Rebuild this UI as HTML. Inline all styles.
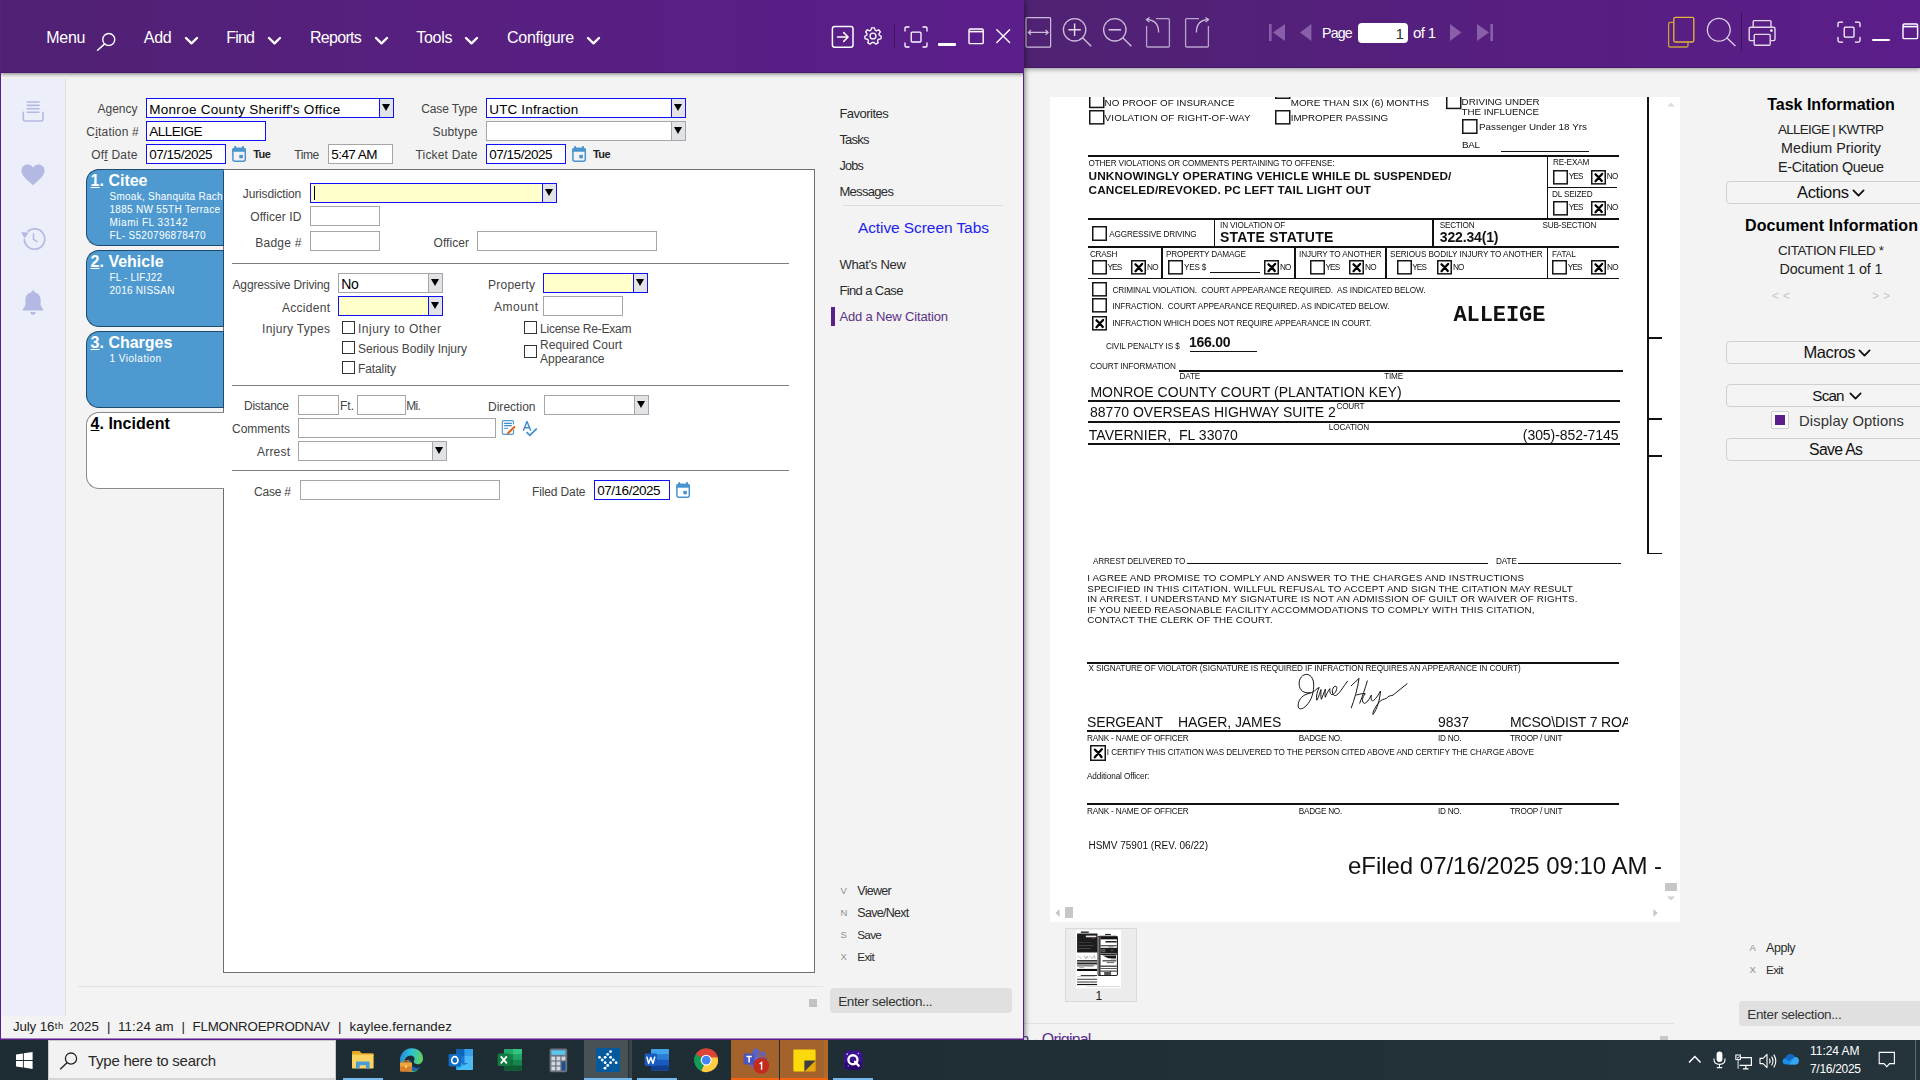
<!DOCTYPE html>
<html><head><meta charset="utf-8"><title>Citation</title>
<style>
*{box-sizing:border-box;margin:0;padding:0}
html,body{width:1920px;height:1080px;overflow:hidden;background:#f3f3f3;font-family:"Liberation Sans",sans-serif;}
.a{position:absolute;white-space:pre;line-height:1;display:block}
.p{position:absolute;display:block}
svg.p{overflow:visible}
#root{position:relative;width:1920px;height:1080px;overflow:hidden}
#lw{position:absolute;left:0;top:0;width:1024px;height:1040px;background:#f3f3f3;overflow:hidden;border-left:1px solid #5a1e8a;border-right:1px solid #5a1e8a;border-bottom:1px solid #5a1e8a;box-shadow:1px 0 5px rgba(0,0,0,.5)}
#lw>*{margin-left:-1px}
#lhead{position:absolute;left:0;top:0;width:1024px;height:73px;border-bottom:1px solid #481b70;background:linear-gradient(90deg,#4f2173 0%,#57207f 40%,#5b1e8b 100%);box-shadow:0 1px 4px rgba(0,0,0,.5)}
#lside{position:absolute;left:1px;top:79px;width:65px;height:937px;background:#eceef9;border-right:1px solid #e0e0e6}
#rw{position:absolute;left:1024px;top:0;width:896px;height:1040px;background:#f3f3f3;overflow:hidden}
#rhead{position:absolute;left:1024px;top:0;width:896px;height:68px;border-bottom:1px solid #451a6c;background:linear-gradient(90deg,#4f2272 0%,#561f7f 50%,#5b1e8a 100%);box-shadow:0 2px 4px rgba(0,0,0,.3)}
#tb{position:absolute;left:0;top:1040px;width:1920px;height:40px;background:linear-gradient(90deg,#1d2b32 0%,#1f2e35 45%,#25343b 100%);overflow:hidden}
#rw>*{margin-left:-1024px}
#doc{position:absolute;left:1050px;top:97px;width:630px;height:825px;background:#fff;overflow:hidden;filter:grayscale(1)}
#doc>*{margin-left:-1050px;margin-top:-97px}
#tb>*{margin-top:-1040px}

</style></head><body><div id="root">
<div id="rw">
<div id="doc">
<div class="p" style="left:1647.35px;top:97px;width:1.7px;height:457px;background:#111;"></div>
<div class="p" style="left:1647.2px;top:337.2px;width:14.8px;height:1.4px;background:#111;"></div>
<div class="p" style="left:1647.2px;top:418.3px;width:14.8px;height:1.4px;background:#111;"></div>
<div class="p" style="left:1647.2px;top:455.3px;width:14.8px;height:1.4px;background:#111;"></div>
<div class="p" style="left:1647.2px;top:552.9px;width:14.8px;height:1.4px;background:#111;"></div>
<svg class="p" style="left:1089px;top:93.3px;" width="15.5" height="15.2" viewBox="0 0 15.5 15.2"><rect x="0.75" y="0.75" width="14" height="13.7" fill="#fff" stroke="#161616" stroke-width="1.5"/></svg>
<span class="a" style="left:1104.6px;top:98px;font-size:9.8px;color:#111;letter-spacing:0.05px;">NO PROOF OF INSURANCE</span>
<svg class="p" style="left:1089px;top:110px;" width="15.5" height="14.6" viewBox="0 0 15.5 14.6"><rect x="0.75" y="0.75" width="14" height="13.1" fill="#fff" stroke="#161616" stroke-width="1.5"/></svg>
<span class="a" style="left:1104.6px;top:113px;font-size:9.8px;color:#111;letter-spacing:0.17px;">VIOLATION OF RIGHT-OF-WAY</span>
<svg class="p" style="left:1274.5px;top:84px;" width="15.5" height="15" viewBox="0 0 15.5 15"><rect x="0.75" y="0.75" width="14" height="13.5" fill="#fff" stroke="#161616" stroke-width="1.5"/></svg>
<span class="a" style="left:1290.7px;top:98px;font-size:9.8px;color:#111;letter-spacing:0.06px;">MORE THAN SIX (6) MONTHS</span>
<svg class="p" style="left:1274.5px;top:110px;" width="15.5" height="14.6" viewBox="0 0 15.5 14.6"><rect x="0.75" y="0.75" width="14" height="13.1" fill="#fff" stroke="#161616" stroke-width="1.5"/></svg>
<span class="a" style="left:1290.7px;top:113px;font-size:9.8px;color:#111;letter-spacing:-0.02px;">IMPROPER PASSING</span>
<svg class="p" style="left:1446px;top:93.6px;" width="15.5" height="15.2" viewBox="0 0 15.5 15.2"><rect x="0.75" y="0.75" width="14" height="13.7" fill="#fff" stroke="#161616" stroke-width="1.5"/></svg>
<span class="a" style="left:1461.6px;top:97px;font-size:9.8px;color:#111;letter-spacing:-0.03px;">DRIVING UNDER</span>
<span class="a" style="left:1461.6px;top:107px;font-size:9.8px;color:#111;letter-spacing:-0.03px;">THE INFLUENCE</span>
<svg class="p" style="left:1462.3px;top:118.6px;" width="15.6" height="15" viewBox="0 0 15.6 15"><rect x="0.75" y="0.75" width="14.1" height="13.5" fill="#fff" stroke="#161616" stroke-width="1.5"/></svg>
<span class="a" style="left:1479px;top:122px;font-size:9.8px;color:#111;letter-spacing:0.04px;">Passenger Under 18 Yrs</span>
<span class="a" style="left:1462px;top:140px;font-size:9.8px;color:#111;letter-spacing:-0.26px;">BAL</span>
<div class="p" style="left:1501px;top:150.95px;width:88px;height:1.1px;background:#111;"></div>
<div class="p" style="left:1088px;top:155.3px;width:531px;height:1.6px;background:#111;"></div>
<span class="a" style="left:1088.4px;top:160px;font-size:8.2px;color:#111;letter-spacing:-0.12px;">OTHER VIOLATIONS OR COMMENTS PERTAINING TO OFFENSE:</span>
<span class="a" style="left:1088.5px;top:171px;font-size:11.8px;color:#111;font-weight:bold;letter-spacing:0.14px;">UNKNOWINGLY OPERATING VEHICLE WHILE DL SUSPENDED/</span>
<span class="a" style="left:1088.5px;top:185px;font-size:11.8px;color:#111;font-weight:bold;letter-spacing:0.11px;">CANCELED/REVOKED. PC LEFT TAIL LIGHT OUT</span>
<div class="p" style="left:1546.9px;top:156px;width:1.6px;height:62.8px;background:#111;"></div>
<span class="a" style="left:1553px;top:159px;font-size:8.2px;color:#111;letter-spacing:-0.16px;">RE-EXAM</span>
<svg class="p" style="left:1553.3px;top:169.6px;" width="15" height="14.6" viewBox="0 0 15 14.6"><rect x="0.75" y="0.75" width="13.5" height="13.1" fill="#fff" stroke="#161616" stroke-width="1.5"/></svg>
<span class="a" style="left:1568.7px;top:173px;font-size:8.2px;color:#111;letter-spacing:-0.8px;">YES</span>
<svg class="p" style="left:1590.9px;top:169.6px;" width="15" height="14.6" viewBox="0 0 15 14.6"><rect x="0.75" y="0.75" width="13.5" height="13.1" fill="#fff" stroke="#161616" stroke-width="1.5"/><path d="M4.5 4.34 Q7.5 6.7 10.8 10.95 M11.1 3.94 Q7.9 7.3 4.5 11.25" stroke="#000" stroke-width="2.3" stroke-linecap="round" fill="none"/></svg>
<span class="a" style="left:1606.8px;top:173px;font-size:8.2px;color:#111;letter-spacing:-0.8px;">NO</span>
<div class="p" style="left:1547px;top:186.65px;width:70px;height:1.7px;background:#111;"></div>
<span class="a" style="left:1552px;top:191px;font-size:8.2px;color:#111;letter-spacing:-0.18px;">DL SEIZED</span>
<svg class="p" style="left:1553.3px;top:200.9px;" width="15" height="14.6" viewBox="0 0 15 14.6"><rect x="0.75" y="0.75" width="13.5" height="13.1" fill="#fff" stroke="#161616" stroke-width="1.5"/></svg>
<span class="a" style="left:1568.7px;top:204px;font-size:8.2px;color:#111;letter-spacing:-0.8px;">YES</span>
<svg class="p" style="left:1590.9px;top:200.9px;" width="15" height="14.6" viewBox="0 0 15 14.6"><rect x="0.75" y="0.75" width="13.5" height="13.1" fill="#fff" stroke="#161616" stroke-width="1.5"/><path d="M4.5 4.34 Q7.5 6.7 10.8 10.95 M11.1 3.94 Q7.9 7.3 4.5 11.25" stroke="#000" stroke-width="2.3" stroke-linecap="round" fill="none"/></svg>
<span class="a" style="left:1606.8px;top:204px;font-size:8.2px;color:#111;letter-spacing:-0.8px;">NO</span>
<div class="p" style="left:1088px;top:218px;width:531px;height:1.6px;background:#111;"></div>
<svg class="p" style="left:1092px;top:226.2px;" width="15" height="15" viewBox="0 0 15 15"><rect x="0.75" y="0.75" width="13.5" height="13.5" fill="#fff" stroke="#161616" stroke-width="1.5"/></svg>
<span class="a" style="left:1109.3px;top:231px;font-size:8.2px;color:#111;letter-spacing:-0.16px;">AGGRESSIVE DRIVING</span>
<div class="p" style="left:1213.8px;top:219px;width:1.6px;height:28px;background:#111;"></div>
<span class="a" style="left:1220px;top:222px;font-size:8.2px;color:#111;letter-spacing:-0.13px;">IN VIOLATION OF</span>
<span class="a" style="left:1220px;top:230px;font-size:14px;color:#111;font-weight:bold;letter-spacing:0.26px;">STATE STATUTE</span>
<div class="p" style="left:1432px;top:219px;width:1.6px;height:28px;background:#111;"></div>
<span class="a" style="left:1439.75px;top:222px;font-size:8.2px;color:#111;letter-spacing:-0.26px;">SECTION</span>
<span class="a" style="left:1439.75px;top:230px;font-size:14px;color:#111;font-weight:bold;letter-spacing:-0.15px;">322.34(1)</span>
<span class="a" style="left:1542.5px;top:222px;font-size:8.2px;color:#111;letter-spacing:-0.2px;">SUB-SECTION</span>
<div class="p" style="left:1088px;top:246.3px;width:531px;height:1.6px;background:#111;"></div>
<span class="a" style="left:1090px;top:251px;font-size:8.2px;color:#111;letter-spacing:-0.33px;">CRASH</span>
<svg class="p" style="left:1092px;top:259.6px;" width="15" height="14.6" viewBox="0 0 15 14.6"><rect x="0.75" y="0.75" width="13.5" height="13.1" fill="#fff" stroke="#161616" stroke-width="1.5"/></svg>
<span class="a" style="left:1107.4px;top:264px;font-size:8.2px;color:#111;letter-spacing:-0.8px;">YES</span>
<svg class="p" style="left:1131.2px;top:259.6px;" width="15" height="14.6" viewBox="0 0 15 14.6"><rect x="0.75" y="0.75" width="13.5" height="13.1" fill="#fff" stroke="#161616" stroke-width="1.5"/><path d="M4.5 4.34 Q7.5 6.7 10.8 10.95 M11.1 3.94 Q7.9 7.3 4.5 11.25" stroke="#000" stroke-width="2.3" stroke-linecap="round" fill="none"/></svg>
<span class="a" style="left:1147.1px;top:264px;font-size:8.2px;color:#111;letter-spacing:-0.8px;">NO</span>
<div class="p" style="left:1161.2px;top:247px;width:1.6px;height:31.5px;background:#111;"></div>
<span class="a" style="left:1166px;top:251px;font-size:8.2px;color:#111;letter-spacing:-0.19px;">PROPERTY DAMAGE</span>
<svg class="p" style="left:1168px;top:259.6px;" width="15" height="14.6" viewBox="0 0 15 14.6"><rect x="0.75" y="0.75" width="13.5" height="13.1" fill="#fff" stroke="#161616" stroke-width="1.5"/></svg>
<span class="a" style="left:1184px;top:264px;font-size:8.2px;color:#111;letter-spacing:-0.21px;">YES $</span>
<div class="p" style="left:1210px;top:272.1px;width:50px;height:1.2px;background:#111;"></div>
<svg class="p" style="left:1264px;top:259.6px;" width="15" height="14.6" viewBox="0 0 15 14.6"><rect x="0.75" y="0.75" width="13.5" height="13.1" fill="#fff" stroke="#161616" stroke-width="1.5"/><path d="M4.5 4.34 Q7.5 6.7 10.8 10.95 M11.1 3.94 Q7.9 7.3 4.5 11.25" stroke="#000" stroke-width="2.3" stroke-linecap="round" fill="none"/></svg>
<span class="a" style="left:1280px;top:264px;font-size:8.2px;color:#111;letter-spacing:-0.8px;">NO</span>
<div class="p" style="left:1294.2px;top:247px;width:1.6px;height:31.5px;background:#111;"></div>
<span class="a" style="left:1299px;top:251px;font-size:8.2px;color:#111;letter-spacing:-0.12px;">INJURY TO ANOTHER</span>
<svg class="p" style="left:1310px;top:259.6px;" width="15" height="14.6" viewBox="0 0 15 14.6"><rect x="0.75" y="0.75" width="13.5" height="13.1" fill="#fff" stroke="#161616" stroke-width="1.5"/></svg>
<span class="a" style="left:1325.4px;top:264px;font-size:8.2px;color:#111;letter-spacing:-0.8px;">YES</span>
<svg class="p" style="left:1349.2px;top:259.6px;" width="15" height="14.6" viewBox="0 0 15 14.6"><rect x="0.75" y="0.75" width="13.5" height="13.1" fill="#fff" stroke="#161616" stroke-width="1.5"/><path d="M4.5 4.34 Q7.5 6.7 10.8 10.95 M11.1 3.94 Q7.9 7.3 4.5 11.25" stroke="#000" stroke-width="2.3" stroke-linecap="round" fill="none"/></svg>
<span class="a" style="left:1365.1px;top:264px;font-size:8.2px;color:#111;letter-spacing:-0.8px;">NO</span>
<div class="p" style="left:1385.4px;top:247px;width:1.6px;height:31.5px;background:#111;"></div>
<span class="a" style="left:1390px;top:251px;font-size:8.2px;color:#111;letter-spacing:-0.08px;">SERIOUS BODILY INJURY TO ANOTHER</span>
<svg class="p" style="left:1396.8px;top:259.6px;" width="15" height="14.6" viewBox="0 0 15 14.6"><rect x="0.75" y="0.75" width="13.5" height="13.1" fill="#fff" stroke="#161616" stroke-width="1.5"/></svg>
<span class="a" style="left:1412.2px;top:264px;font-size:8.2px;color:#111;letter-spacing:-0.8px;">YES</span>
<svg class="p" style="left:1437px;top:259.6px;" width="15" height="14.6" viewBox="0 0 15 14.6"><rect x="0.75" y="0.75" width="13.5" height="13.1" fill="#fff" stroke="#161616" stroke-width="1.5"/><path d="M4.5 4.34 Q7.5 6.7 10.8 10.95 M11.1 3.94 Q7.9 7.3 4.5 11.25" stroke="#000" stroke-width="2.3" stroke-linecap="round" fill="none"/></svg>
<span class="a" style="left:1452.9px;top:264px;font-size:8.2px;color:#111;letter-spacing:-0.8px;">NO</span>
<div class="p" style="left:1546.9px;top:247px;width:1.6px;height:31.5px;background:#111;"></div>
<span class="a" style="left:1552px;top:251px;font-size:8.2px;color:#111;letter-spacing:0.01px;">FATAL</span>
<svg class="p" style="left:1552.4px;top:259.6px;" width="15" height="14.6" viewBox="0 0 15 14.6"><rect x="0.75" y="0.75" width="13.5" height="13.1" fill="#fff" stroke="#161616" stroke-width="1.5"/></svg>
<span class="a" style="left:1567.8px;top:264px;font-size:8.2px;color:#111;letter-spacing:-0.8px;">YES</span>
<svg class="p" style="left:1591.2px;top:259.6px;" width="15" height="14.6" viewBox="0 0 15 14.6"><rect x="0.75" y="0.75" width="13.5" height="13.1" fill="#fff" stroke="#161616" stroke-width="1.5"/><path d="M4.5 4.34 Q7.5 6.7 10.8 10.95 M11.1 3.94 Q7.9 7.3 4.5 11.25" stroke="#000" stroke-width="2.3" stroke-linecap="round" fill="none"/></svg>
<span class="a" style="left:1607.1px;top:264px;font-size:8.2px;color:#111;letter-spacing:-0.8px;">NO</span>
<div class="p" style="left:1088px;top:277.7px;width:531px;height:1.6px;background:#111;"></div>
<svg class="p" style="left:1092px;top:281.6px;" width="15" height="14.6" viewBox="0 0 15 14.6"><rect x="0.75" y="0.75" width="13.5" height="13.1" fill="#fff" stroke="#161616" stroke-width="1.5"/></svg>
<span class="a" style="left:1112.4px;top:287px;font-size:8.2px;color:#111;letter-spacing:-0.1px;">CRIMINAL VIOLATION.  COURT APPEARANCE REQUIRED.  AS INDICATED BELOW.</span>
<svg class="p" style="left:1092px;top:298.2px;" width="15" height="14.6" viewBox="0 0 15 14.6"><rect x="0.75" y="0.75" width="13.5" height="13.1" fill="#fff" stroke="#161616" stroke-width="1.5"/></svg>
<span class="a" style="left:1112.4px;top:303px;font-size:8.2px;color:#111;letter-spacing:-0.11px;">INFRACTION.  COURT APPEARANCE REQUIRED. AS INDICATED BELOW.</span>
<svg class="p" style="left:1092px;top:316px;" width="15" height="14.6" viewBox="0 0 15 14.6"><rect x="0.75" y="0.75" width="13.5" height="13.1" fill="#fff" stroke="#161616" stroke-width="1.5"/><path d="M4.5 4.34 Q7.5 6.7 10.8 10.95 M11.1 3.94 Q7.9 7.3 4.5 11.25" stroke="#000" stroke-width="2.3" stroke-linecap="round" fill="none"/></svg>
<span class="a" style="left:1112.4px;top:320px;font-size:8.2px;color:#111;letter-spacing:-0.12px;">INFRACTION WHICH DOES NOT REQUIRE APPEARANCE IN COURT.</span>
<span class="a" style="left:1453.4px;top:305px;font-size:22px;color:#111;font-weight:bold;font-family:'Liberation Mono',monospace;letter-spacing:-0.07px;">ALLEIGE</span>
<span class="a" style="left:1105.9px;top:343px;font-size:8.2px;color:#111;letter-spacing:-0.12px;">CIVIL PENALTY IS $</span>
<span class="a" style="left:1189px;top:335px;font-size:14px;color:#111;font-weight:bold;letter-spacing:-0.26px;">166.00</span>
<div class="p" style="left:1190px;top:350.6px;width:67px;height:1.2px;background:#111;"></div>
<span class="a" style="left:1090px;top:363px;font-size:8.2px;color:#111;letter-spacing:-0.12px;">COURT INFORMATION</span>
<div class="p" style="left:1179.3px;top:370.1px;width:443.7px;height:1.6px;background:#111;"></div>
<span class="a" style="left:1179.6px;top:373px;font-size:8.2px;color:#111;letter-spacing:-0.22px;">DATE</span>
<span class="a" style="left:1384.3px;top:373px;font-size:8.2px;color:#111;letter-spacing:-0.23px;">TIME</span>
<span class="a" style="left:1090.4px;top:385px;font-size:14px;color:#111;letter-spacing:0.04px;">MONROE COUNTY COURT (PLANTATION KEY)</span>
<div class="p" style="left:1088px;top:400.1px;width:532px;height:1.6px;background:#111;"></div>
<span class="a" style="left:1090px;top:405px;font-size:14px;color:#111;letter-spacing:0.01px;">88770 OVERSEAS HIGHWAY SUITE 2</span>
<span class="a" style="left:1336.5px;top:403px;font-size:8.2px;color:#111;letter-spacing:-0.25px;">COURT</span>
<div class="p" style="left:1088px;top:421.2px;width:532px;height:1.6px;background:#111;"></div>
<span class="a" style="left:1328.8px;top:424px;font-size:8.2px;color:#111;letter-spacing:-0.13px;">LOCATION</span>
<span class="a" style="left:1088.8px;top:428px;font-size:14px;color:#111;letter-spacing:0.04px;">TAVERNIER,  FL 33070</span>
<span class="a" style="left:1522.8px;top:428px;font-size:14px;color:#111;letter-spacing:-0.06px;">(305)-852-7145</span>
<div class="p" style="left:1088px;top:443.4px;width:532px;height:1.6px;background:#111;"></div>
<span class="a" style="left:1093px;top:558px;font-size:8.2px;color:#111;letter-spacing:-0.15px;">ARREST DELIVERED TO</span>
<div class="p" style="left:1186.8px;top:562.8px;width:301.2px;height:1.6px;background:#111;"></div>
<span class="a" style="left:1496px;top:558px;font-size:8.2px;color:#111;letter-spacing:-0.09px;">DATE</span>
<div class="p" style="left:1518px;top:562.8px;width:103px;height:1.6px;background:#111;"></div>
<span class="a" style="left:1087.2px;top:573px;font-size:9.8px;color:#111;letter-spacing:0.16px;">I AGREE AND PROMISE TO COMPLY AND ANSWER TO THE CHARGES AND INSTRUCTIONS</span>
<span class="a" style="left:1087.2px;top:584px;font-size:9.8px;color:#111;letter-spacing:0.18px;">SPECIFIED IN THIS CITATION. WILLFUL REFUSAL TO ACCEPT AND SIGN THE CITATION MAY RESULT</span>
<span class="a" style="left:1087.2px;top:594px;font-size:9.8px;color:#111;letter-spacing:0.15px;">IN ARREST. I UNDERSTAND MY SIGNATURE IS NOT AN ADMISSION OF GUILT OR WAIVER OF RIGHTS.</span>
<span class="a" style="left:1087.2px;top:605px;font-size:9.8px;color:#111;letter-spacing:0.16px;">IF YOU NEED REASONABLE FACILITY ACCOMMODATIONS TO COMPLY WITH THIS CITATION,</span>
<span class="a" style="left:1087.2px;top:615px;font-size:9.8px;color:#111;letter-spacing:0.14px;">CONTACT THE CLERK OF THE COURT.</span>
<div class="p" style="left:1087px;top:661.95px;width:532px;height:1.7px;background:#111;"></div>
<span class="a" style="left:1088.4px;top:665px;font-size:8.2px;color:#111;letter-spacing:-0.1px;">X SIGNATURE OF VIOLATOR (SIGNATURE IS REQUIRED IF INFRACTION REQUIRES AN APPEARANCE IN COURT)</span>
<svg class="p" style="left:1290px;top:668px;" width="130" height="52" viewBox="0 0 1920 768"><path d="M300 365 C200 380 140 330 135 240 C130 150 190 90 250 95 C320 100 355 180 350 270 C345 400 300 520 200 590 C160 610 120 612 120 560 C120 480 170 410 250 385 C300 370 330 362 345 352 C370 335 405 295 432 288 C405 330 380 430 396 476 C425 430 445 350 458 318 C456 370 452 430 464 462 C482 420 505 350 522 312 C520 350 512 400 522 432 C540 385 565 330 590 305 C585 340 590 380 612 392 C650 400 700 330 690 285 C680 255 640 270 628 320 C618 370 640 410 668 408 C720 400 790 270 850 195 M905 262 L1020 152 C1000 300 950 470 905 588 M1142 192 C1110 300 1070 420 1030 520 M985 398 C1040 382 1090 372 1112 380 C1065 425 1055 515 1100 522 C1150 512 1180 432 1202 400 C1190 450 1200 500 1232 482 C1282 442 1312 382 1336 340 C1330 450 1292 600 1226 686 C1212 660 1262 560 1340 482 C1372 456 1420 462 1442 432 C1470 402 1500 412 1522 400 L1730 232" fill="none" stroke="#0a0a0a" stroke-width="14" stroke-linecap="round" stroke-linejoin="round"/></svg>
<span class="a" style="left:1087px;top:715px;font-size:14px;color:#111;letter-spacing:-0.15px;">SERGEANT</span>
<span class="a" style="left:1178px;top:715px;font-size:14px;color:#111;letter-spacing:-0.09px;">HAGER, JAMES</span>
<span class="a" style="left:1438px;top:715px;font-size:14px;color:#111;letter-spacing:-0.05px;">9837</span>
<div class="p" style="left:1510px;top:710px;width:118px;height:20px;overflow:hidden">
<span class="a" style="left:0px;top:5px;font-size:14px;color:#111;letter-spacing:-0.17px;">MCSO\DIST 7 ROAD</span>
</div>
<div class="p" style="left:1087px;top:730.45px;width:532px;height:1.7px;background:#111;"></div>
<span class="a" style="left:1087px;top:735px;font-size:8.2px;color:#111;letter-spacing:-0.18px;">RANK - NAME OF OFFICER</span>
<span class="a" style="left:1298.8px;top:735px;font-size:8.2px;color:#111;letter-spacing:-0.26px;">BADGE NO.</span>
<span class="a" style="left:1438px;top:735px;font-size:8.2px;color:#111;letter-spacing:-0.27px;">ID NO.</span>
<span class="a" style="left:1510px;top:735px;font-size:8.2px;color:#111;letter-spacing:-0.21px;">TROOP / UNIT</span>
<span class="a" style="left:1087px;top:808px;font-size:8.2px;color:#111;letter-spacing:-0.18px;">RANK - NAME OF OFFICER</span>
<span class="a" style="left:1298.8px;top:808px;font-size:8.2px;color:#111;letter-spacing:-0.26px;">BADGE NO.</span>
<span class="a" style="left:1438px;top:808px;font-size:8.2px;color:#111;letter-spacing:-0.27px;">ID NO.</span>
<span class="a" style="left:1510px;top:808px;font-size:8.2px;color:#111;letter-spacing:-0.21px;">TROOP / UNIT</span>
<svg class="p" style="left:1090px;top:744.6px;" width="16" height="16" viewBox="0 0 16 16"><rect x="0.75" y="0.75" width="14.5" height="14.5" fill="#fff" stroke="#161616" stroke-width="1.5"/><path d="M4.8 4.72 Q8 7.4 11.52 12 M11.82 4.32 Q8.4 8 4.8 12.3" stroke="#000" stroke-width="2.3" stroke-linecap="round" fill="none"/></svg>
<span class="a" style="left:1106.8px;top:749px;font-size:8.2px;color:#111;letter-spacing:-0.1px;">I CERTIFY THIS CITATION WAS DELIVERED TO THE PERSON CITED ABOVE AND CERTIFY THE CHARGE ABOVE</span>
<span class="a" style="left:1087px;top:773px;font-size:8.2px;color:#111;letter-spacing:-0.12px;">Additional Officer:</span>
<div class="p" style="left:1087px;top:802.85px;width:532px;height:1.7px;background:#111;"></div>
<span class="a" style="left:1088.4px;top:841px;font-size:10px;color:#111;letter-spacing:0.02px;">HSMV 75901 (REV. 06/22)</span>
<span class="a" style="left:1348px;top:854px;font-size:24px;color:#111;letter-spacing:-0.03px;">eFiled 07/16/2025 09:10 AM -</span>
<svg class="p" style="left:1667px;top:101.5px;" width="8" height="5" viewBox="0 0 8 5"><path d="M0 4.6 L4 0.4 L8 4.6Z" fill="#dcdcdc"/></svg>
<div class="p" style="left:1665px;top:883.4px;width:12px;height:7.6px;background:#c6c6c6;"></div>
<svg class="p" style="left:1667px;top:895.6px;" width="8" height="5" viewBox="0 0 8 5"><path d="M0 0.4 L4 4.6 L8 0.4Z" fill="#d0d0d0"/></svg>
<svg class="p" style="left:1054.6px;top:909px;" width="5" height="8" viewBox="0 0 5 8"><path d="M4.6 0 L0.4 4 L4.6 8Z" fill="#c6c6c6"/></svg>
<div class="p" style="left:1065px;top:907.4px;width:7.6px;height:11px;background:#c6c6c6;"></div>
<svg class="p" style="left:1653.4px;top:909px;" width="5" height="8" viewBox="0 0 5 8"><path d="M0.4 0 L4.6 4 L0.4 8Z" fill="#c6c6c6"/></svg>
</div>
<div id="rhead"></div>
<svg class="p" style="left:1024.6px;top:16px;" width="28" height="33" viewBox="0 0 28 33"><rect x="1" y="1.6" width="24.6" height="29.6" rx="1" fill="none" stroke="#cdbdda" stroke-width="1.2"/><path d="M3.5 16.4 H23 M6 14 L3.4 16.4 L6 18.8 M20.6 14 L23.2 16.4 L20.6 18.8" fill="none" stroke="#cdbdda" stroke-width="1.2"/></svg>
<svg class="p" style="left:1062px;top:17px;" width="32" height="32" viewBox="0 0 32 32"><circle cx="12.6" cy="12.8" r="11.2" fill="none" stroke="#cdbdda" stroke-width="1.3"/><path d="M20.6 20.8 L29.2 29.2" stroke="#cdbdda" stroke-width="1.4"/><path d="M6.4 12.8 H18.8 M12.6 6.6 V19" stroke="#e6dcee" stroke-width="1.4"/></svg>
<svg class="p" style="left:1102px;top:17px;" width="32" height="32" viewBox="0 0 32 32"><circle cx="12.8" cy="12.8" r="11.2" fill="none" stroke="#cdbdda" stroke-width="1.3"/><path d="M20.8 20.8 L29.4 29.2" stroke="#cdbdda" stroke-width="1.4"/><path d="M6.6 12.8 H19" stroke="#e6dcee" stroke-width="1.4"/></svg>
<svg class="p" style="left:1144px;top:16px;" width="28" height="33" viewBox="0 0 28 33"><path d="M12 2.6 H24.4 Q25.4 2.6 25.4 3.6 V30 Q25.4 31 24.4 31 H3.6 Q2.6 31 2.6 30 V10" fill="none" stroke="#b9a3ca" stroke-width="1.3"/><path d="M3 3.6 Q14.6 4 14.6 16.4" fill="none" stroke="#cdbdda" stroke-width="1.3"/><path d="M5.6 1.4 L2.4 3.6 L5.4 6" fill="none" stroke="#cdbdda" stroke-width="1.2"/></svg>
<svg class="p" style="left:1183.2px;top:16px;" width="28" height="33" viewBox="0 0 28 33"><path d="M16 2.6 H3.6 Q2.6 2.6 2.6 3.6 V30 Q2.6 31 3.6 31 H24.4 Q25.4 31 25.4 30 V10" fill="none" stroke="#b9a3ca" stroke-width="1.3"/><path d="M25 3.6 Q13.4 4 13.4 16.4" fill="none" stroke="#cdbdda" stroke-width="1.3"/><path d="M22.4 1.4 L25.6 3.6 L22.6 6" fill="none" stroke="#cdbdda" stroke-width="1.2"/></svg>
<svg class="p" style="left:1269px;top:24px;" width="17" height="17" viewBox="0 0 17 17"><rect x="0" y="0" width="2.6" height="17" fill="#8a5fa9"/><path d="M16 0 V17 L4 8.5Z" fill="#8a5fa9"/></svg>
<svg class="p" style="left:1300px;top:24px;" width="12" height="17" viewBox="0 0 12 17"><path d="M11.4 0 V17 L0 8.5Z" fill="#8a5fa9"/></svg>
<span class="a" style="left:1322px;top:26px;font-size:14.2px;color:#fff;letter-spacing:-0.8px;">Page</span>
<div class="p" style="left:1358px;top:23px;width:50px;height:20px;background:#fff;border-radius:4px;"></div>
<span class="a" style="left:1395.38px;top:26px;font-size:15.5px;color:#333;">1</span>
<span class="a" style="left:1413px;top:25px;font-size:15px;color:#fff;letter-spacing:-0.67px;">of 1</span>
<svg class="p" style="left:1450px;top:24px;" width="12" height="17" viewBox="0 0 12 17"><path d="M0 0 V17 L11.4 8.5Z" fill="#8a5fa9"/></svg>
<svg class="p" style="left:1477px;top:24px;" width="17" height="17" viewBox="0 0 17 17"><rect x="13.4" y="0" width="2.6" height="17" fill="#8a5fa9"/><path d="M0 0 V17 L12 8.5Z" fill="#8a5fa9"/></svg>
<svg class="p" style="left:1667px;top:16px;" width="29" height="33" viewBox="0 0 29 33"><rect x="6.8" y="1.4" width="20" height="24.6" rx="1.4" fill="none" stroke="#e4b63a" stroke-width="1.3"/><path d="M6.6 6.4 H3 Q1.6 6.4 1.6 7.8 V29.6 Q1.6 31 3 31 H19.6 Q21 31 21 29.6 V26.2" fill="none" stroke="#c9a03c" stroke-width="1.3"/></svg>
<svg class="p" style="left:1706px;top:17px;" width="32" height="32" viewBox="0 0 32 32"><circle cx="12.8" cy="12.8" r="11.4" fill="none" stroke="#ddd0e6" stroke-width="1.3"/><path d="M21 21 L29.4 29" stroke="#ddd0e6" stroke-width="1.4"/></svg>
<div class="p" style="left:1741px;top:12px;width:1px;height:39px;background:#3a1560;"></div>
<svg class="p" style="left:1748px;top:19px;" width="29" height="28" viewBox="0 0 29 28"><g fill="none" stroke="#e2d8ea" stroke-width="1.4" stroke-linejoin="round"><path d="M5.2 8 V2.6 Q5.2 1.6 6.2 1.6 H22 Q23 1.6 23 2.6 V8"/><path d="M6 21.6 H2.6 Q1.2 21.6 1.2 20.2 V9.6 Q1.2 8.2 2.6 8.2 H25.6 Q27 8.2 27 9.6 V20.2 Q27 21.6 25.6 21.6 H22.4"/><rect x="6.2" y="15.4" width="16" height="10.8" rx="1"/></g><circle cx="23.4" cy="11.6" r="1.3" fill="#fff"/></svg>
<svg class="p" style="left:1837.4px;top:20.6px;" width="24" height="22" viewBox="0 0 24 22"><g fill="none" stroke="#fff" stroke-width="1.25" stroke-linecap="round" stroke-linejoin="round"><path d="M1 5.6 V2.5 Q1 1 2.5 1 H5.6 M18.4 1 H21.5 Q23 1 23 2.5 V5.6 M23 16.4 V19.5 Q23 21 21.5 21 H18.4 M5.6 21 H2.5 Q1 21 1 19.5 V16.4"/><rect x="7.2" y="6.2" width="9.8" height="9.8" rx="1"/></g></svg>
<div class="p" style="left:1872px;top:38.6px;width:18px;height:2.4px;background:#fff;border-radius:1px;"></div>
<svg class="p" style="left:1902.4px;top:22.6px;" width="17" height="17" viewBox="0 0 17 17"><rect x="1" y="1" width="14.6" height="14.6" rx="1.2" fill="none" stroke="#fff" stroke-width="1.4"/><path d="M1 3.6 H15.6" stroke="#fff" stroke-width="1.6"/></svg>
<span class="a" style="left:1767.25px;top:97px;font-size:16px;color:#000;font-weight:bold;letter-spacing:-0.01px;">Task Information</span>
<span class="a" style="left:1778px;top:123px;font-size:13.4px;color:#222;letter-spacing:-0.66px;">ALLEIGE | KWTRP</span>
<span class="a" style="left:1781px;top:141px;font-size:14.3px;color:#222;letter-spacing:0.05px;">Medium Priority</span>
<span class="a" style="left:1778px;top:160px;font-size:14.3px;color:#222;letter-spacing:-0.25px;">E-Citation Queue</span>
<div class="p" style="left:1725.5px;top:181px;width:214px;height:22.6px;background:#f4f4f4;border:1px solid #cfcfcf;border-radius:4px;"></div>
<span class="a" style="left:1797px;top:184px;font-size:16.5px;color:#111;letter-spacing:-0.35px;">Actions</span>
<svg class="p" style="left:1852px;top:189px;" width="13" height="9" viewBox="0 0 13 9"><path d="M1.4 1.4 L6.5 6.6 L11.6 1.4" fill="none" stroke="#111" stroke-width="1.8" stroke-linecap="round" stroke-linejoin="round"/></svg>
<span class="a" style="left:1745px;top:218px;font-size:16px;color:#000;font-weight:bold;letter-spacing:0.12px;">Document Information</span>
<span class="a" style="left:1778px;top:244px;font-size:13.4px;color:#222;letter-spacing:-0.35px;">CITATION FILED *</span>
<span class="a" style="left:1779.5px;top:262px;font-size:14.3px;color:#222;letter-spacing:-0.14px;">Document 1 of 1</span>
<span class="a" style="left:1772px;top:290px;font-size:12px;color:#c6c6c6;letter-spacing:3.98px;">&lt;&lt;</span>
<span class="a" style="left:1872px;top:290px;font-size:12px;color:#c6c6c6;letter-spacing:3.98px;">&gt;&gt;</span>
<div class="p" style="left:1725.5px;top:341px;width:214px;height:22.6px;background:#f4f4f4;border:1px solid #cfcfcf;border-radius:4px;"></div>
<span class="a" style="left:1803.5px;top:344px;font-size:16.5px;color:#111;letter-spacing:-0.42px;">Macros</span>
<svg class="p" style="left:1858.3px;top:349px;" width="13" height="9" viewBox="0 0 13 9"><path d="M1.4 1.4 L6.5 6.6 L11.6 1.4" fill="none" stroke="#111" stroke-width="1.8" stroke-linecap="round" stroke-linejoin="round"/></svg>
<div class="p" style="left:1725.5px;top:384px;width:214px;height:22.6px;background:#f4f4f4;border:1px solid #cfcfcf;border-radius:4px;"></div>
<span class="a" style="left:1812.3px;top:388px;font-size:15.2px;color:#111;letter-spacing:-0.8px;">Scan</span>
<svg class="p" style="left:1848.5px;top:392px;" width="13" height="9" viewBox="0 0 13 9"><path d="M1.4 1.4 L6.5 6.6 L11.6 1.4" fill="none" stroke="#111" stroke-width="1.8" stroke-linecap="round" stroke-linejoin="round"/></svg>
<div class="p" style="left:1771px;top:410.5px;width:18px;height:18px;background:#fafafa;border:1px solid #d0d0d0;border-radius:2px;"></div>
<div class="p" style="left:1775px;top:414.5px;width:10px;height:10px;background:#5c1e8a;"></div>
<span class="a" style="left:1799px;top:414px;font-size:14.8px;color:#333;letter-spacing:0.1px;">Display Options</span>
<div class="p" style="left:1725.5px;top:438px;width:214px;height:22.6px;background:#f4f4f4;border:1px solid #cfcfcf;border-radius:4px;"></div>
<span class="a" style="left:1809px;top:442px;font-size:15.8px;color:#111;letter-spacing:-0.66px;">Save As</span>
<span class="a" style="left:1749.5px;top:943px;font-size:9.5px;color:#8f8f8f;">A</span>
<span class="a" style="left:1766px;top:942px;font-size:12.5px;color:#2b2b2b;letter-spacing:-0.44px;">Apply</span>
<span class="a" style="left:1749.5px;top:965px;font-size:9.5px;color:#8f8f8f;">X</span>
<span class="a" style="left:1766px;top:965px;font-size:11.8px;color:#2b2b2b;letter-spacing:-0.72px;">Exit</span>
<div class="p" style="left:1739px;top:1001px;width:190px;height:25px;background:#e0e0e0;border-radius:4px;"></div>
<span class="a" style="left:1747.3px;top:1008px;font-size:13.5px;color:#333;letter-spacing:-0.36px;">Enter selection...</span>
<div class="p" style="left:1065px;top:928px;width:72px;height:74px;background:#ececec;border:1px solid #dadada;"></div>
<svg class="p" style="left:1076px;top:929.8px;" width="45" height="58.2" viewBox="312 118 540 698"><rect x="312" y="118" width="540" height="698" fill="#fff"/><rect x="370" y="135" width="95" height="18" fill="#333"/><rect x="325" y="160" width="245" height="225" fill="#1c1c1c"/><rect x="430" y="185" width="125" height="20" fill="#e8e8e8"/><rect x="505" y="212" width="30" height="9" fill="#b33"/><rect x="340" y="262" width="160" height="7" fill="#4a4a4a"/><rect x="345" y="300" width="185" height="8" fill="#555"/><rect x="340" y="335" width="150" height="8" fill="#5a5a5a"/><rect x="325" y="385" width="245" height="8" fill="#777"/><rect x="660" y="165" width="70" height="14" fill="#222"/><rect x="577" y="192" width="232" height="472" rx="14" fill="#fff" stroke="#222" stroke-width="13"/><rect x="590" y="195" width="16" height="468" fill="#1a1a1a"/><rect x="606" y="196" width="198" height="34" fill="#111"/><rect x="665" y="250" width="135" height="18" fill="#222"/><rect x="606" y="300" width="195" height="13" fill="#333"/><rect x="700" y="316" width="60" height="10" fill="#666"/><rect x="606" y="332" width="198" height="68" fill="#1a1a1a"/><rect x="615" y="345" width="50" height="40" fill="#555"/><rect x="730" y="350" width="30" height="18" fill="#444"/><rect x="606" y="405" width="195" height="13" fill="#222"/><path d="M630 425 H792 V458 H700 Z" fill="#111"/><rect x="730" y="460" width="65" height="9" fill="#444"/><rect x="630" y="482" width="165" height="12" fill="#111"/><rect x="680" y="505" width="90" height="10" fill="#444"/><rect x="606" y="545" width="195" height="14" fill="#222"/><rect x="606" y="575" width="195" height="10" fill="#3a3a3a"/><rect x="606" y="605" width="195" height="12" fill="#222"/><rect x="650" y="622" width="75" height="36" fill="#555"/><rect x="725" y="610" width="8" height="50" fill="#222"/><path d="M330 445 q12 -25 25 0 t25 0 M410 425 l20 40 l15 -35 l15 30 M470 430 q20 10 35 30 q10 -30 30 -35 l5 40" fill="none" stroke="#8a8a8a" stroke-width="7"/><rect x="325" y="480" width="240" height="16" fill="#111"/><rect x="325" y="500" width="240" height="10" fill="#5a5a5a"/><rect x="325" y="514" width="240" height="12" fill="#222"/><rect x="325" y="530" width="240" height="10" fill="#666"/><rect x="325" y="544" width="200" height="10" fill="#333"/><rect x="350" y="566" width="60" height="8" fill="#888"/><rect x="325" y="585" width="240" height="25" fill="#0a0a0a"/><rect x="370" y="660" width="195" height="10" fill="#111"/><rect x="325" y="674" width="215" height="6" fill="#999"/><rect x="325" y="702" width="240" height="16" fill="#6a6a6a"/><rect x="325" y="736" width="240" height="12" fill="#333"/><rect x="325" y="765" width="240" height="14" fill="#111"/><rect x="440" y="795" width="400" height="5" fill="#aaa"/></svg>
<span class="a" style="left:1095.46px;top:990px;font-size:12px;color:#222;">1</span>
<div class="p" style="left:1024px;top:1023px;width:650px;height:1px;background:#e0e0e0;"></div>
<div class="p" style="left:1660px;top:1036px;width:8px;height:4px;background:#c8c8c8;"></div>
<span class="a" style="left:1020.5px;top:1032px;font-size:16px;color:#5b2d8c;">n</span>
<span class="a" style="left:1033.7px;top:1032px;font-size:16px;color:#5b2d8c;letter-spacing:-0.8px;">- Original</span>
</div>
<div id="lw">
<div id="lside"></div>
<div id="lhead"></div>
<span class="a" style="left:46.25px;top:30px;font-size:16px;color:#fff;letter-spacing:-0.26px;">Menu</span>
<svg class="p" style="left:96px;top:31px;" width="21" height="21" viewBox="0 0 21 21"><circle cx="12.75" cy="8.5" r="6" fill="none" stroke="#fff" stroke-width="1.4"/><path d="M8.6 12.9 L1.6 19.2" stroke="#fff" stroke-width="1.5" stroke-linecap="round"/></svg>
<span class="a" style="left:143.75px;top:30px;font-size:16px;color:#fff;letter-spacing:-0.23px;">Add</span>
<svg class="p" style="left:184.6px;top:37px;" width="13" height="7.6" viewBox="0 0 13 7.6"><path d="M1 1 L6.5 6.3 L12 1" fill="none" stroke="#fff" stroke-width="2.4" stroke-linecap="round" stroke-linejoin="round"/></svg>
<span class="a" style="left:226.25px;top:30px;font-size:16px;color:#fff;letter-spacing:-0.79px;">Find</span>
<svg class="p" style="left:267.85px;top:37px;" width="13" height="7.6" viewBox="0 0 13 7.6"><path d="M1 1 L6.5 6.3 L12 1" fill="none" stroke="#fff" stroke-width="2.4" stroke-linecap="round" stroke-linejoin="round"/></svg>
<span class="a" style="left:310px;top:30px;font-size:16px;color:#fff;letter-spacing:-0.71px;">Reports</span>
<svg class="p" style="left:374.6px;top:37px;" width="13" height="7.6" viewBox="0 0 13 7.6"><path d="M1 1 L6.5 6.3 L12 1" fill="none" stroke="#fff" stroke-width="2.4" stroke-linecap="round" stroke-linejoin="round"/></svg>
<span class="a" style="left:416.25px;top:30px;font-size:16px;color:#fff;letter-spacing:-0.28px;">Tools</span>
<svg class="p" style="left:465.1px;top:37px;" width="13" height="7.6" viewBox="0 0 13 7.6"><path d="M1 1 L6.5 6.3 L12 1" fill="none" stroke="#fff" stroke-width="2.4" stroke-linecap="round" stroke-linejoin="round"/></svg>
<span class="a" style="left:507px;top:30px;font-size:16px;color:#fff;letter-spacing:-0.27px;">Configure</span>
<svg class="p" style="left:586.6px;top:37px;" width="13" height="7.6" viewBox="0 0 13 7.6"><path d="M1 1 L6.5 6.3 L12 1" fill="none" stroke="#fff" stroke-width="2.4" stroke-linecap="round" stroke-linejoin="round"/></svg>
<svg class="p" style="left:830.4px;top:24.2px;" width="26" height="26" viewBox="0 0 26 26"><rect x="2.4" y="2.6" width="20.6" height="20.6" rx="2.2" fill="none" stroke="#fff" stroke-width="1.5"/><path d="M7.5 13 H18 M13.7 8.6 L18.1 13 L13.7 17.4" fill="none" stroke="#fff" stroke-width="1.5" stroke-linecap="round" stroke-linejoin="round"/></svg>
<svg class="p" style="left:862px;top:25px;" width="22" height="22" viewBox="0 0 22 22"><g transform="translate(11,11) scale(0.9)" fill="none" stroke="#fff" stroke-width="1.45" stroke-linejoin="round"><circle r="3.3"/><path d="M-1.6 -9 H1.6 L2.3 -6.5 L3.9 -5.7 L6.3 -6.9 L8.2 -4.6 L6.6 -2.4 L7 -0.8 L9.2 0.3 L8.7 3.2 L6.1 3.6 L5.1 5 L5.7 7.6 L3.1 9 L1.2 7.2 H-1.2 L-3.1 9 L-5.7 7.6 L-5.1 5 L-6.1 3.6 L-8.7 3.2 L-9.2 0.3 L-7 -0.8 L-6.6 -2.4 L-8.2 -4.6 L-6.3 -6.9 L-3.9 -5.7 L-2.3 -6.5 Z"/></g></svg>
<div class="p" style="left:894px;top:24px;width:1px;height:24px;background:#3c1560;"></div>
<svg class="p" style="left:903.6px;top:25.6px;" width="24" height="22" viewBox="0 0 24 22"><g fill="none" stroke="#fff" stroke-width="1.3" stroke-linecap="round" stroke-linejoin="round"><path d="M1 5 V2.2 Q1 1 2.2 1 H5 M19 1 H21.8 Q23 1 23 2.2 V5 M23 17 V19.8 Q23 21 21.8 21 H19 M5 21 H2.2 Q1 21 1 19.8 V17"/><rect x="7.2" y="6.2" width="9.8" height="9.8" rx="1"/></g></svg>
<div class="p" style="left:938px;top:43.3px;width:18px;height:2.4px;background:#fff;border-radius:1px;"></div>
<svg class="p" style="left:968.2px;top:27.6px;" width="17" height="17" viewBox="0 0 17 17"><rect x="1" y="1" width="14.2" height="14.6" rx="1.2" fill="none" stroke="#fff" stroke-width="1.4"/><path d="M1 3.6 H15.2" stroke="#fff" stroke-width="1.6"/></svg>
<svg class="p" style="left:996px;top:29px;" width="15" height="15" viewBox="0 0 15 15"><path d="M0.8 0.8 L13.6 13.6 M13.6 0.8 L0.8 13.6" stroke="#fff" stroke-width="1.4" stroke-linecap="round"/></svg>
<svg class="p" style="left:22px;top:100px;" width="23" height="23" viewBox="0 0 23 23"><g stroke="#b4b9e3" stroke-width="1.6" fill="none" stroke-linecap="round"><path d="M5.3 2 H17 M5.3 5.4 H17 M5.3 8.8 H17 M5.3 12.2 H17"/><path d="M1.3 12.2 V19 Q1.3 21 3.3 21 H19 Q21 21 21 19 V12.2" stroke-linejoin="round"/></g></svg>
<svg class="p" style="left:21px;top:164px;" width="24" height="22" viewBox="0 0 24 22"><path d="M12 21.2 C4 14.5 0.5 11.3 0.5 6.6 C0.5 3 3.2 0.5 6.5 0.5 C8.8 0.5 10.8 1.7 12 3.6 C13.2 1.7 15.2 0.5 17.5 0.5 C20.8 0.5 23.5 3 23.5 6.6 C23.5 11.3 20 14.5 12 21.2Z" fill="#b4b9e3"/></svg>
<svg class="p" style="left:20px;top:227px;" width="26" height="24" viewBox="0 0 26 24"><g fill="none" stroke="#b4b9e3" stroke-width="1.7"><path d="M4.3 12 A10.2 10.2 0 1 0 7.6 4.5"/><path d="M13.5 6.3 V12.4 L17.5 14.8" stroke-width="1.5"/></g><path d="M1.2 5.2 L8.6 5.6 L4.6 11.6 Z" fill="#b4b9e3"/></svg>
<svg class="p" style="left:22px;top:290px;" width="22" height="26" viewBox="0 0 22 26"><path d="M11 0.4 C12 0.4 12.6 1 12.6 2.2 C16.3 3 18.6 6 18.6 10 V15.5 L21.2 19.4 V20.4 H0.8 V19.4 L3.4 15.5 V10 C3.4 6 5.7 3 9.4 2.2 C9.4 1 10 0.4 11 0.4Z M8.3 22 H13.7 C13.7 23.6 12.5 24.8 11 24.8 C9.5 24.8 8.3 23.6 8.3 22Z" fill="#b4b9e3"/></svg>
<span class="a" style="left:97.5px;top:103px;font-size:12px;color:#444;letter-spacing:-0.01px;">A<u>g</u>ency</span>
<div class="p" style="left:146px;top:98px;width:248px;height:20px;background:#fff;border:1px solid #1010f8;"><i style="position:absolute;right:0;top:0;width:14px;height:18px;background:#e2e3e6;border-left:1px solid #1010f8"></i><i style="position:absolute;right:2.6px;top:5px;border-left:4px solid transparent;border-right:4px solid transparent;border-top:7.5px solid #000"></i></div>
<span class="a" style="left:149.25px;top:103px;font-size:13.5px;color:#000;letter-spacing:0.28px;">Monroe County Sheriff's Office</span>
<span class="a" style="left:86.25px;top:126px;font-size:12px;color:#444;letter-spacing:0.2px;">C<u>i</u>tation #</span>
<div class="p" style="left:146px;top:121px;width:120px;height:20px;background:#fff;border:1px solid #1010f8;"></div>
<span class="a" style="left:149.25px;top:125px;font-size:13.5px;color:#000;letter-spacing:-0.51px;">ALLEIGE</span>
<span class="a" style="left:91.25px;top:149px;font-size:12px;color:#444;letter-spacing:0.25px;">Of<u>f</u> Date</span>
<div class="p" style="left:146px;top:144px;width:80px;height:20px;background:#fff;border:1px solid #1010f8;"></div>
<span class="a" style="left:149.25px;top:148px;font-size:13.5px;color:#000;letter-spacing:-0.48px;">07/15/2025</span>
<svg class="p" style="left:232px;top:146px;" width="15" height="16" viewBox="0 0 15 16"><rect x="0.9" y="2.4" width="12.4" height="12.8" rx="2" fill="none" stroke="#4a94cf" stroke-width="1.5"/><path d="M0.2 4.2 Q0.2 1.8 2.6 1.8 H11.6 Q14 1.8 14 4.2 V5.8 H0.2Z" fill="#4a94cf"/><rect x="2.2" y="0" width="2" height="3" rx="0.8" fill="#4a94cf"/><rect x="10" y="0" width="2" height="3" rx="0.8" fill="#4a94cf"/><rect x="7.3" y="8.9" width="3.6" height="3.4" fill="#4a94cf"/></svg>
<span class="a" style="left:253.25px;top:149px;font-size:11px;color:#222;font-weight:bold;letter-spacing:-0.62px;">Tue</span>
<span class="a" style="left:294.25px;top:149px;font-size:12px;color:#444;letter-spacing:-0.41px;">Time</span>
<div class="p" style="left:328px;top:144px;width:65px;height:20px;background:#fff;border:1px solid #a6a6a6;"></div>
<span class="a" style="left:331.25px;top:148px;font-size:13.5px;color:#000;letter-spacing:-0.55px;">5:47 AM</span>
<span class="a" style="left:421.25px;top:103px;font-size:12px;color:#444;letter-spacing:-0.11px;">Case Type</span>
<div class="p" style="left:486px;top:98px;width:200px;height:20px;background:#fff;border:1px solid #1010f8;"><i style="position:absolute;right:0;top:0;width:14px;height:18px;background:#e2e3e6;border-left:1px solid #1010f8"></i><i style="position:absolute;right:2.6px;top:5px;border-left:4px solid transparent;border-right:4px solid transparent;border-top:7.5px solid #000"></i></div>
<span class="a" style="left:489.25px;top:103px;font-size:13.5px;color:#000;letter-spacing:0.15px;">UTC Infraction</span>
<span class="a" style="left:432.5px;top:126px;font-size:12px;color:#444;letter-spacing:0.16px;">Subtype</span>
<div class="p" style="left:486px;top:121px;width:200px;height:20px;background:#fff;border:1px solid #a6a6a6;"><i style="position:absolute;right:0;top:0;width:14px;height:18px;background:#e2e3e6;border-left:1px solid #a6a6a6"></i><i style="position:absolute;right:2.6px;top:5px;border-left:4px solid transparent;border-right:4px solid transparent;border-top:7.5px solid #000"></i></div>
<span class="a" style="left:415.5px;top:149px;font-size:12px;color:#444;letter-spacing:0.18px;">Ticket Date</span>
<div class="p" style="left:486px;top:144px;width:80px;height:20px;background:#fff;border:1px solid #1010f8;"></div>
<span class="a" style="left:489.25px;top:148px;font-size:13.5px;color:#000;letter-spacing:-0.48px;">07/15/2025</span>
<svg class="p" style="left:572px;top:146px;" width="15" height="16" viewBox="0 0 15 16"><rect x="0.9" y="2.4" width="12.4" height="12.8" rx="2" fill="none" stroke="#4a94cf" stroke-width="1.5"/><path d="M0.2 4.2 Q0.2 1.8 2.6 1.8 H11.6 Q14 1.8 14 4.2 V5.8 H0.2Z" fill="#4a94cf"/><rect x="2.2" y="0" width="2" height="3" rx="0.8" fill="#4a94cf"/><rect x="10" y="0" width="2" height="3" rx="0.8" fill="#4a94cf"/><rect x="7.3" y="8.9" width="3.6" height="3.4" fill="#4a94cf"/></svg>
<span class="a" style="left:593px;top:149px;font-size:11px;color:#222;font-weight:bold;letter-spacing:-0.62px;">Tue</span>
<div class="p" style="left:223px;top:169px;width:592px;height:803.5px;background:#fff;border:1px solid #6f6f6f;"></div>
<div class="p" style="left:86px;top:169px;width:138px;height:76.5px;background:#4e9ad0;border:1px solid #1c4a70;border-radius:13px 0 0 13px;border-right:0;"></div>
<span class="a" style="left:90.6px;top:173px;font-size:16px;color:#fff;font-weight:bold;"><u>1</u>. Citee</span>
<span class="a" style="left:109.5px;top:192px;font-size:10px;color:#fff;letter-spacing:0.26px;">Smoak, Shanquita Rach</span>
<span class="a" style="left:109.5px;top:205px;font-size:10px;color:#fff;letter-spacing:0.3px;">1885 NW 55TH Terrace</span>
<span class="a" style="left:109.5px;top:218px;font-size:10px;color:#fff;letter-spacing:0.51px;">Miami FL 33142</span>
<span class="a" style="left:109.5px;top:231px;font-size:10px;color:#fff;letter-spacing:0.3px;">FL- S520796878470</span>
<div class="p" style="left:223px;top:170.5px;width:1px;height:75px;background:#1c4a70;"></div>
<div class="p" style="left:86px;top:250px;width:138px;height:76.5px;background:#4e9ad0;border:1px solid #1c4a70;border-radius:13px 0 0 13px;border-right:0;"></div>
<span class="a" style="left:90.6px;top:254px;font-size:16px;color:#fff;font-weight:bold;"><u>2</u>. Vehicle</span>
<span class="a" style="left:109.5px;top:273px;font-size:10px;color:#fff;letter-spacing:0.17px;">FL - LIFJ22</span>
<span class="a" style="left:109.5px;top:286px;font-size:10px;color:#fff;letter-spacing:0.27px;">2016 NISSAN</span>
<div class="p" style="left:223px;top:251px;width:1px;height:75px;background:#1c4a70;"></div>
<div class="p" style="left:86px;top:331px;width:138px;height:76.5px;background:#4e9ad0;border:1px solid #1c4a70;border-radius:13px 0 0 13px;border-right:0;"></div>
<span class="a" style="left:90.6px;top:335px;font-size:16px;color:#fff;font-weight:bold;"><u>3</u>. Charges</span>
<span class="a" style="left:109.5px;top:354px;font-size:10px;color:#fff;letter-spacing:0.5px;">1 Violation</span>
<div class="p" style="left:223px;top:332px;width:1px;height:75px;background:#1c4a70;"></div>
<div class="p" style="left:86px;top:412px;width:138px;height:76.5px;background:#fff;border:1px solid #8a8a8a;border-radius:13px 0 0 13px;border-right:0;"></div>
<span class="a" style="left:90.6px;top:416px;font-size:16px;color:#000;font-weight:bold;"><u>4</u>. Incident</span>
<div class="p" style="left:223px;top:413.5px;width:1px;height:74px;background:#fff;"></div>
<span class="a" style="left:242.8px;top:188px;font-size:12px;color:#444;letter-spacing:-0.14px;">Jurisdiction</span>
<div class="p" style="left:310px;top:183px;width:247px;height:20px;background:#ffffcc;border:1px solid #1010f8;"><i style="position:absolute;right:0;top:0;width:14px;height:18px;background:#e2e3e6;border-left:1px solid #1010f8"></i><i style="position:absolute;right:2.6px;top:5px;border-left:4px solid transparent;border-right:4px solid transparent;border-top:7.5px solid #000"></i><i style="position:absolute;left:3px;top:2px;width:1px;height:14px;background:#000"></i></div>
<span class="a" style="left:250.3px;top:211px;font-size:12px;color:#444;letter-spacing:0.06px;">Officer ID</span>
<div class="p" style="left:310px;top:206px;width:70px;height:20px;background:#fff;border:1px solid #a6a6a6;"></div>
<span class="a" style="left:255.3px;top:237px;font-size:12px;color:#444;letter-spacing:0.22px;">Badge #</span>
<div class="p" style="left:310px;top:231px;width:70px;height:20px;background:#fff;border:1px solid #a6a6a6;"></div>
<span class="a" style="left:433.5px;top:237px;font-size:12px;color:#444;letter-spacing:0.06px;">Officer</span>
<div class="p" style="left:477px;top:231px;width:180px;height:20px;background:#fff;border:1px solid #a6a6a6;"></div>
<div class="p" style="left:232px;top:263px;width:557px;height:1px;background:#7d7d7d;"></div>
<span class="a" style="left:232.5px;top:279px;font-size:12px;color:#444;letter-spacing:-0.15px;">Aggressive Driving</span>
<div class="p" style="left:338px;top:273px;width:105px;height:20px;background:#fff;border:1px solid #a6a6a6;"><i style="position:absolute;right:0;top:0;width:14px;height:18px;background:#e2e3e6;border-left:1px solid #a6a6a6"></i><i style="position:absolute;right:2.6px;top:5px;border-left:4px solid transparent;border-right:4px solid transparent;border-top:7.5px solid #000"></i></div>
<span class="a" style="left:341.25px;top:277px;font-size:14px;color:#000;letter-spacing:-0.4px;">No</span>
<span class="a" style="left:282px;top:302px;font-size:12px;color:#444;letter-spacing:0.28px;">Accident</span>
<div class="p" style="left:338px;top:296px;width:105px;height:20px;background:#ffffcc;border:1px solid #1010f8;"><i style="position:absolute;right:0;top:0;width:14px;height:18px;background:#e2e3e6;border-left:1px solid #1010f8"></i><i style="position:absolute;right:2.6px;top:5px;border-left:4px solid transparent;border-right:4px solid transparent;border-top:7.5px solid #000"></i></div>
<span class="a" style="left:262px;top:323px;font-size:12px;color:#444;letter-spacing:0.32px;">Injury Types</span>
<div class="p" style="left:342px;top:321px;width:13px;height:13px;background:#fff;border:1px solid #333;"></div>
<span class="a" style="left:358px;top:323px;font-size:12px;color:#444;letter-spacing:0.5px;">Injury to Other</span>
<div class="p" style="left:342px;top:341px;width:13px;height:13px;background:#fff;border:1px solid #333;"></div>
<span class="a" style="left:358px;top:343px;font-size:12px;color:#444;letter-spacing:-0.02px;">Serious Bodily Injury</span>
<div class="p" style="left:342px;top:361px;width:13px;height:13px;background:#fff;border:1px solid #333;"></div>
<span class="a" style="left:358px;top:363px;font-size:12px;color:#444;letter-spacing:-0.1px;">Fatality</span>
<span class="a" style="left:488px;top:279px;font-size:12px;color:#444;letter-spacing:0.24px;">Property</span>
<div class="p" style="left:543px;top:273px;width:105px;height:20px;background:#ffffcc;border:1px solid #1010f8;"><i style="position:absolute;right:0;top:0;width:14px;height:18px;background:#e2e3e6;border-left:1px solid #1010f8"></i><i style="position:absolute;right:2.6px;top:5px;border-left:4px solid transparent;border-right:4px solid transparent;border-top:7.5px solid #000"></i></div>
<span class="a" style="left:494px;top:301px;font-size:12px;color:#444;letter-spacing:0.53px;">Amount</span>
<div class="p" style="left:543px;top:296px;width:80px;height:20px;background:#fff;border:1px solid #a6a6a6;"></div>
<div class="p" style="left:524px;top:321px;width:13px;height:13px;background:#fff;border:1px solid #333;"></div>
<span class="a" style="left:540px;top:323px;font-size:12px;color:#444;letter-spacing:-0.23px;">License Re-Exam</span>
<div class="p" style="left:524px;top:345px;width:13px;height:13px;background:#fff;border:1px solid #333;"></div>
<span class="a" style="left:540px;top:339px;font-size:12px;color:#444;letter-spacing:0.05px;">Required Court</span>
<span class="a" style="left:540px;top:353px;font-size:12px;color:#444;letter-spacing:-0.02px;">Appearance</span>
<div class="p" style="left:232px;top:385px;width:557px;height:1px;background:#7d7d7d;"></div>
<span class="a" style="left:244px;top:400px;font-size:12px;color:#444;letter-spacing:-0.24px;">Distance</span>
<div class="p" style="left:298px;top:395px;width:41px;height:20px;background:#fff;border:1px solid #a6a6a6;"></div>
<span class="a" style="left:340px;top:400px;font-size:12px;color:#444;">Ft.</span>
<div class="p" style="left:357px;top:395px;width:49px;height:20px;background:#fff;border:1px solid #a6a6a6;"></div>
<span class="a" style="left:406.3px;top:400px;font-size:12px;color:#444;letter-spacing:-0.75px;">Mi.</span>
<span class="a" style="left:488px;top:401px;font-size:12px;color:#444;letter-spacing:0.02px;">Direction</span>
<div class="p" style="left:544px;top:395px;width:105px;height:20px;background:#fff;border:1px solid #a6a6a6;"><i style="position:absolute;right:0;top:0;width:14px;height:18px;background:#e2e3e6;border-left:1px solid #a6a6a6"></i><i style="position:absolute;right:2.6px;top:5px;border-left:4px solid transparent;border-right:4px solid transparent;border-top:7.5px solid #000"></i></div>
<span class="a" style="left:232px;top:423px;font-size:12px;color:#444;">Comments</span>
<div class="p" style="left:298px;top:418px;width:198px;height:20px;background:#fff;border:1px solid #a6a6a6;"></div>
<svg class="p" style="left:501px;top:419px;" width="16" height="17" viewBox="0 0 16 17"><path d="M2.6 1.6 H11.2 Q12.5 1.6 12.5 2.9 V5.6 M12.5 10.8 V14 Q12.5 15.3 11.2 15.3 H2.6 Q1.3 15.3 1.3 14 V2.9 Q1.3 1.6 2.6 1.6" fill="none" stroke="#4f99d4" stroke-width="1.15"/><path d="M3.1 4.4 H10.9 M3.1 6.6 H10.9 M3.1 9.2 H7" stroke="#3f8ccd" stroke-width="1.1"/><path d="M13.3 8 L7.1 14.2" stroke="#e06a1e" stroke-width="2.2" stroke-linecap="round"/></svg>
<svg class="p" style="left:522px;top:420px;" width="16" height="17" viewBox="0 0 16 17"><path d="M1.3 10.7 L5 1.4 L8.8 10.7 M2.8 7.8 H7.2" fill="none" stroke="#3f8ccd" stroke-width="1.45" stroke-linejoin="round"/><path d="M4.5 12.2 L7.9 15.4 L14.7 8.6" fill="none" stroke="#3f8ccd" stroke-width="1.7"/></svg>
<span class="a" style="left:257px;top:446px;font-size:12px;color:#444;letter-spacing:0.2px;">Arrest</span>
<div class="p" style="left:298px;top:441px;width:149px;height:20px;background:#fff;border:1px solid #a6a6a6;"><i style="position:absolute;right:0;top:0;width:14px;height:18px;background:#e2e3e6;border-left:1px solid #a6a6a6"></i><i style="position:absolute;right:2.6px;top:5px;border-left:4px solid transparent;border-right:4px solid transparent;border-top:7.5px solid #000"></i></div>
<div class="p" style="left:232px;top:470px;width:557px;height:1px;background:#7d7d7d;"></div>
<span class="a" style="left:254px;top:486px;font-size:12px;color:#444;letter-spacing:-0.2px;">Case #</span>
<div class="p" style="left:300px;top:480px;width:200px;height:20px;background:#fff;border:1px solid #a6a6a6;"></div>
<span class="a" style="left:532px;top:486px;font-size:12px;color:#444;letter-spacing:-0.13px;">Filed Date</span>
<div class="p" style="left:594px;top:480px;width:76px;height:20px;background:#fff;border:1px solid #1010f8;"></div>
<span class="a" style="left:597.25px;top:484px;font-size:13.5px;color:#000;letter-spacing:-0.48px;">07/16/2025</span>
<svg class="p" style="left:676px;top:482px;" width="15" height="16" viewBox="0 0 15 16"><rect x="0.9" y="2.4" width="12.4" height="12.8" rx="2" fill="none" stroke="#4a94cf" stroke-width="1.5"/><path d="M0.2 4.2 Q0.2 1.8 2.6 1.8 H11.6 Q14 1.8 14 4.2 V5.8 H0.2Z" fill="#4a94cf"/><rect x="2.2" y="0" width="2" height="3" rx="0.8" fill="#4a94cf"/><rect x="10" y="0" width="2" height="3" rx="0.8" fill="#4a94cf"/><rect x="7.3" y="8.9" width="3.6" height="3.4" fill="#4a94cf"/></svg>
<span class="a" style="left:839.4px;top:107px;font-size:13px;color:#2b2b2b;letter-spacing:-0.5px;">Favorites</span>
<span class="a" style="left:839.4px;top:133px;font-size:13px;color:#2b2b2b;letter-spacing:-0.8px;">Tasks</span>
<span class="a" style="left:839.4px;top:160px;font-size:12.6px;color:#2b2b2b;letter-spacing:-0.71px;">Jobs</span>
<span class="a" style="left:839.4px;top:185px;font-size:13px;color:#2b2b2b;letter-spacing:-0.68px;">Messages</span>
<div class="p" style="left:843px;top:205px;width:160px;height:1px;background:#dcdcdc;"></div>
<span class="a" style="left:857.9px;top:220px;font-size:15.5px;color:#2222ee;letter-spacing:-0.08px;">Active Screen Tabs</span>
<span class="a" style="left:839.4px;top:258px;font-size:13px;color:#2b2b2b;letter-spacing:-0.27px;">What's New</span>
<span class="a" style="left:839.4px;top:284px;font-size:13px;color:#2b2b2b;letter-spacing:-0.61px;">Find a Case</span>
<div class="p" style="left:831px;top:307px;width:4px;height:19px;background:#5b1e8b;"></div>
<span class="a" style="left:839.4px;top:310px;font-size:13px;color:#5a3286;letter-spacing:-0.16px;">Add a New Citation</span>
<span class="a" style="left:840.5px;top:886px;font-size:9.5px;color:#8f8f8f;">V</span>
<span class="a" style="left:857.3px;top:885px;font-size:12.5px;color:#2b2b2b;letter-spacing:-0.7px;">Viewer</span>
<span class="a" style="left:840.5px;top:908px;font-size:9.5px;color:#8f8f8f;">N</span>
<span class="a" style="left:857.3px;top:907px;font-size:12.5px;color:#2b2b2b;letter-spacing:-0.71px;">Save/Next</span>
<span class="a" style="left:840.5px;top:930px;font-size:9.5px;color:#8f8f8f;">S</span>
<span class="a" style="left:857.3px;top:930px;font-size:11.8px;color:#2b2b2b;letter-spacing:-0.8px;">Save</span>
<span class="a" style="left:840.5px;top:952px;font-size:9.5px;color:#8f8f8f;">X</span>
<span class="a" style="left:857.3px;top:952px;font-size:11.8px;color:#2b2b2b;letter-spacing:-0.72px;">Exit</span>
<div class="p" style="left:78px;top:986px;width:745px;height:1px;background:#e2e2e2;"></div>
<div class="p" style="left:809px;top:999px;width:8px;height:8px;background:#c2c2c2;"></div>
<div class="p" style="left:830px;top:988px;width:182px;height:25px;background:#e0e0e0;border-radius:4px;"></div>
<span class="a" style="left:838.2px;top:995px;font-size:13.5px;color:#333;letter-spacing:-0.36px;">Enter selection...</span>
<span class="a" style="left:13px;top:1020px;font-size:13.3px;color:#222;letter-spacing:-0.14px;">July 16</span>
<span class="a" style="left:54.8px;top:1021px;font-size:9.5px;color:#222;letter-spacing:0.68px;">th</span>
<span class="a" style="left:69.5px;top:1020px;font-size:13.3px;color:#222;letter-spacing:-0.1px;">2025</span>
<span class="a" style="left:107px;top:1020px;font-size:13.3px;color:#222;">|</span>
<span class="a" style="left:118px;top:1020px;font-size:13.3px;color:#222;letter-spacing:0.15px;">11:24 am</span>
<span class="a" style="left:181.5px;top:1020px;font-size:13.3px;color:#222;">|</span>
<span class="a" style="left:192.5px;top:1020px;font-size:13.3px;color:#222;letter-spacing:-0.19px;">FLMONROEPRODNAV</span>
<span class="a" style="left:338px;top:1020px;font-size:13.3px;color:#222;">|</span>
<span class="a" style="left:349.5px;top:1020px;font-size:13.3px;color:#222;letter-spacing:0.08px;">kaylee.fernandez</span>
<div class="p" style="left:0px;top:1038px;width:1024px;height:1px;background:rgba(96,40,150,.55);"></div>
</div>
<div id="tb">
<svg class="p" style="left:16px;top:1052px;" width="17" height="17" viewBox="0 0 17 17"><path d="M0 2.4 L6.9 1.4 V8 H0Z M7.8 1.3 L16.6 0 V8 H7.8Z M0 8.9 H6.9 V15.5 L0 14.5Z M7.8 8.9 H16.6 V16.9 L7.8 15.6Z" fill="#fff"/></svg>
<div class="p" style="left:48px;top:1040px;width:288px;height:40px;background:#f2f2f2;border:1px solid #c9c9c9;border-bottom:2px solid #d6d6d6;"></div>
<svg class="p" style="left:59px;top:1051px;" width="20" height="20" viewBox="0 0 20 20"><circle cx="12" cy="7.6" r="5.6" fill="none" stroke="#222" stroke-width="1.3"/><path d="M8 11.8 L1.2 18.2" stroke="#222" stroke-width="1.4"/></svg>
<span class="a" style="left:88px;top:1053px;font-size:15px;color:#2a2a2a;letter-spacing:-0.25px;">Type here to search</span>
<div class="p" style="left:584px;top:1040px;width:44px;height:40px;background:#475257;"></div>
<div class="p" style="left:628px;top:1040px;width:1px;height:40px;background:#232e33;"></div>
<div class="p" style="left:629px;top:1040px;width:3px;height:40px;background:#38444a;"></div>
<div class="p" style="left:731px;top:1040px;width:48px;height:40px;background:#a4632c;"></div>
<div class="p" style="left:780px;top:1040px;width:44px;height:40px;background:#a4632c;"></div>
<div class="p" style="left:824px;top:1040px;width:4px;height:40px;background:#b06a2c;"></div>
<div class="p" style="left:343px;top:1078px;width:40px;height:2px;background:#76b9ed;"></div>
<div class="p" style="left:584px;top:1078px;width:48px;height:2px;background:#76b9ed;"></div>
<div class="p" style="left:637px;top:1078px;width:40px;height:2px;background:#76b9ed;"></div>
<div class="p" style="left:731px;top:1078px;width:48px;height:2px;background:#f7630c;"></div>
<div class="p" style="left:780px;top:1078px;width:48px;height:2px;background:#f7630c;"></div>
<div class="p" style="left:833px;top:1078px;width:40px;height:2px;background:#76b9ed;"></div>
<svg class="p" style="left:351px;top:1049px;" width="24" height="22" viewBox="0 0 24 22"><path d="M1 3.2 Q1 2 2.2 2 H8.6 L10.6 4.2 H21.4 Q22.6 4.2 22.6 5.4 V7 H1Z" fill="#e9a825"/><path d="M1 5.6 H22.6 V18.4 Q22.6 19.6 21.4 19.6 H2.2 Q1 19.6 1 18.4Z" fill="#fbd35f"/><path d="M5 19.6 V13.6 Q5 12.6 6 12.6 H17.6 Q18.6 12.6 18.6 13.6 V19.6 H15 V16.2 H8.6 V19.6Z" fill="#4a9bdc"/></svg>
<svg class="p" style="left:399px;top:1047px;" width="25" height="26" viewBox="0 0 25 26"><defs><linearGradient id="eg" x1="0" y1="0.3" x2="1" y2="0.5"><stop offset="0" stop-color="#2486d8"/><stop offset="0.45" stop-color="#2ec2d6"/><stop offset="1" stop-color="#62d455"/></linearGradient></defs><path d="M12.6 1.2 C19.4 1.2 24 5.8 24 11.4 C24 15 21.4 17.2 18.6 17.2 C16.2 17.2 14.8 16 14.8 14.6 C14.8 13.6 15.6 13.2 15.6 11.8 C15.6 10 14 8.6 11.6 8.6 C8 8.6 5.4 11.6 5.4 15.2 C5.4 20 9.4 23.6 14.4 23.6 C16.6 23.6 18.6 23 20.2 22 C18.4 24 15.6 25 12.6 25 C6 25 1 19.6 1 13 C1 6.4 6 1.2 12.6 1.2Z" fill="url(#eg)"/><path d="M5.4 15.2 C5.4 20 9.4 23.6 14.4 23.6 C17.4 23.6 20 22.2 21.6 20 C20 21 18 21.2 16.2 20.6 C12.8 19.6 11 16.4 11.8 13.2 C10 13 8 13.6 7 15 Z" fill="#1668b8"/><rect x="1" y="15.4" width="12" height="9.4" rx="1.2" fill="#d9822b"/><rect x="1" y="15.4" width="12" height="4" rx="1" fill="#f0a43a"/><path d="M4.6 15.4 V13.8 H9.4 V15.4" fill="none" stroke="#c77522" stroke-width="1.2"/><rect x="6.2" y="18.6" width="1.6" height="2" fill="#fff1c9"/></svg>
<svg class="p" style="left:448px;top:1048px;" width="26" height="24" viewBox="0 0 26 24"><rect x="8" y="1" width="17" height="21" rx="1.5" fill="#1a78d2"/><rect x="8" y="1" width="8.5" height="7" fill="#0f62b8"/><rect x="16.5" y="1" width="8.5" height="7" fill="#35a0ea"/><rect x="16.5" y="8" width="8.5" height="7" fill="#4fb7f2"/><path d="M8 12 L25 22 H9.5 Q8 22 8 20.5Z" fill="#2aa5ea"/><path d="M25 12 L8 22 H23.5 Q25 22 25 20.5Z" fill="#4cc2f5" opacity=".9"/><rect x="0.6" y="6" width="12.4" height="12.4" rx="1.4" fill="#0f6cc4"/><ellipse cx="6.8" cy="12.2" rx="3.1" ry="3.5" fill="none" stroke="#fff" stroke-width="1.7"/></svg>
<svg class="p" style="left:497px;top:1048px;" width="26" height="24" viewBox="0 0 26 24"><rect x="7" y="1" width="18" height="21.6" rx="1.5" fill="#1f9e60"/><rect x="7" y="1" width="9" height="5.4" fill="#22a868"/><rect x="16" y="1" width="9" height="5.4" fill="#34c481"/><rect x="7" y="6.4" width="9" height="5.4" fill="#148149"/><rect x="16" y="6.4" width="9" height="5.4" fill="#21a366"/><rect x="7" y="11.8" width="9" height="5.4" fill="#0f6e3d"/><rect x="16" y="11.8" width="9" height="5.4" fill="#17864e"/><rect x="7" y="17.2" width="18" height="5.4" rx="1" fill="#0e5c33"/><rect x="0.6" y="5.6" width="12.4" height="12.4" rx="1.4" fill="#107c41"/><path d="M3.8 8.4 L9.8 15.4 M9.8 8.4 L3.8 15.4" stroke="#fff" stroke-width="1.8"/></svg>
<svg class="p" style="left:549px;top:1048px;" width="19" height="25" viewBox="0 0 19 25"><rect x="0.6" y="0.6" width="17.6" height="23.6" rx="1.6" fill="#6b7481"/><rect x="2.4" y="2.4" width="14" height="4.4" fill="#59c7ef"/><g fill="#d6dade"><rect x="2.4" y="8.6" width="3.8" height="3.8"/><rect x="7.5" y="8.6" width="3.8" height="3.8"/><rect x="12.6" y="8.6" width="3.8" height="3.8"/><rect x="2.4" y="13.6" width="3.8" height="3.8"/><rect x="7.5" y="13.6" width="3.8" height="3.8"/><rect x="2.4" y="18.6" width="3.8" height="3.8"/><rect x="7.5" y="18.6" width="3.8" height="3.8"/></g><rect x="12.6" y="13.6" width="3.8" height="8.8" fill="#1f4f96"/></svg>
<svg class="p" style="left:596px;top:1048px;" width="24" height="24" viewBox="0 0 24 24"><rect width="24" height="24" fill="#045a9c"/><circle cx="14.6" cy="3.6" r="1.4" fill="#fff"/><circle cx="11.7" cy="6.3" r="1.4" fill="#fff"/><circle cx="3.5" cy="9.3" r="1.4" fill="#fff"/><circle cx="9.1" cy="9.3" r="1.4" fill="#fff"/><circle cx="14.6" cy="9.3" r="1.4" fill="#fff"/><circle cx="6.2" cy="12" r="1.4" fill="#fff"/><circle cx="17.3" cy="11.8" r="1.4" fill="#fff"/><circle cx="9.1" cy="14.7" r="1.4" fill="#fff"/><circle cx="14.6" cy="14.7" r="1.4" fill="#fff"/><circle cx="20.1" cy="14.7" r="1.4" fill="#fff"/><circle cx="11.7" cy="17.5" r="1.4" fill="#fff"/><circle cx="9" cy="20.2" r="1.4" fill="#fff"/></svg>
<svg class="p" style="left:644px;top:1048px;" width="26" height="24" viewBox="0 0 26 24"><rect x="7" y="1" width="18" height="21.6" rx="1.5" fill="#2b7cd3"/><rect x="7" y="1" width="18" height="5.4" rx="1" fill="#41a5ee"/><rect x="7" y="6.4" width="18" height="5.4" fill="#2b7cd3"/><rect x="7" y="11.8" width="18" height="5.4" fill="#185abd"/><rect x="7" y="17.2" width="18" height="5.4" rx="1" fill="#103f91"/><rect x="0.6" y="5.6" width="12.4" height="12.4" rx="1.4" fill="#185abd"/><path d="M2.8 8.6 L4.6 15.4 L6.8 9.6 L9 15.4 L10.8 8.6" fill="none" stroke="#fff" stroke-width="1.5" stroke-linejoin="round"/></svg>
<svg class="p" style="left:693.8px;top:1047.8px;" width="24.4" height="24.4" viewBox="0 0 24 24"><circle cx="12" cy="12" r="11.6" fill="#db4437"/><path d="M12 12 L1.96 6.2 A11.6 11.6 0 0 0 7.2 22.56 Z" fill="#0f9d58"/><path d="M12 12 L7.2 22.56 A11.6 11.6 0 0 0 23.2 9 H12Z" fill="#ffcd40"/><path d="M12 12 L1.96 6.2 A11.6 11.6 0 0 1 23.2 9 H12 Z" fill="#db4437"/><path d="M12 12 L6 15.4 L7.2 22.56 A11.6 11.6 0 0 1 1.96 6.2Z" fill="#0f9d58"/><circle cx="12" cy="12" r="5.4" fill="#fff"/><circle cx="12" cy="12" r="4.3" fill="#4285f4"/></svg>
<svg class="p" style="left:742px;top:1047px;" width="28" height="26" viewBox="0 0 28 26"><circle cx="14" cy="5.4" r="3.6" fill="#5b63c8"/><circle cx="21" cy="7" r="2.5" fill="#5b63c8"/><rect x="8.6" y="9.4" width="12" height="11.6" rx="2.4" fill="#6068cf"/><rect x="18.6" y="10.4" width="6.4" height="8.6" rx="2.2" fill="#5058b8"/><rect x="1.6" y="6.6" width="11" height="11" rx="1.2" fill="#4b53bc"/><path d="M4.4 9.6 H9.8 M7.1 9.6 V15.4" stroke="#fff" stroke-width="1.5"/><circle cx="19.2" cy="18.8" r="8" fill="#c42b1c"/><path d="M17.6 17 L19.6 15.4 V22.8" fill="none" stroke="#fff" stroke-width="1.4"/></svg>
<svg class="p" style="left:793px;top:1049px;" width="23" height="23" viewBox="0 0 23 23"><path d="M1.4 0.6 H21.6 Q22.6 0.6 22.6 1.6 V11.4 L11.4 22.6 H1.4 Q0.4 22.6 0.4 21.6 V1.6 Q0.4 0.6 1.4 0.6Z" fill="#fbd90b"/><path d="M22.6 11.4 V21.6 Q22.6 22.6 21.6 22.6 H11.4Z" fill="#e8a80a"/><path d="M11.4 11.4 H22.6 L11.4 22.6Z" fill="#3d3d3d"/></svg>
<svg class="p" style="left:842.6px;top:1049.8px;" width="20.6" height="20.8" viewBox="0 0 22 23"><rect x="0.6" y="0.6" width="20.6" height="21.6" rx="5.4" fill="#3b1391"/><rect x="1.6" y="12" width="18.6" height="10" rx="5" fill="#2a0a6c"/><circle cx="10.6" cy="10.8" r="5" fill="none" stroke="#fff" stroke-width="2.6"/><path d="M12.8 13 L17 17.4" stroke="#fff" stroke-width="2.6" stroke-linecap="round"/><circle cx="4.2" cy="4.6" r="0.9" fill="#e8c8ff"/><circle cx="16.6" cy="3.8" r="0.8" fill="#e8c8ff"/><circle cx="5.4" cy="17.6" r="0.7" fill="#caa8ff"/></svg>
<svg class="p" style="left:1688px;top:1055px;" width="14" height="9" viewBox="0 0 14 9"><path d="M1 7.6 L6.8 1.6 L12.6 7.6" fill="none" stroke="#fff" stroke-width="1.5"/></svg>
<svg class="p" style="left:1712.6px;top:1051.4px;" width="13" height="18" viewBox="0 0 13 18"><rect x="3.6" y="0.6" width="5.8" height="10.4" rx="2.9" fill="#fff"/><path d="M1 7.4 V8.6 Q1 13.4 6.5 13.4 Q12 13.4 12 8.6 V7.4 M6.5 13.4 V16.4 M3.8 16.6 H9.2" fill="none" stroke="#fff" stroke-width="1.1"/></svg>
<svg class="p" style="left:1735px;top:1052.5px;" width="18" height="17" viewBox="0 0 18 17"><path d="M4 4.6 H16.4 V12.4 H4.6 M8 15.8 H13.6 M10.8 12.4 V15.8" fill="none" stroke="#fff" stroke-width="1.2"/><rect x="0.8" y="2" width="4.6" height="4.6" fill="#25343b" stroke="#fff" stroke-width="1"/><path d="M3.1 6.6 V15.8 M1.6 4.2 L2.8 5.2 L4.6 3.2" fill="none" stroke="#fff" stroke-width="0.9"/></svg>
<svg class="p" style="left:1758.5px;top:1051.5px;" width="19" height="18" viewBox="0 0 19 18"><path d="M1 6.4 H4 L8 2.4 V15.6 L4 11.6 H1Z" fill="none" stroke="#fff" stroke-width="1.1" stroke-linejoin="round"/><path d="M10.4 6.6 Q12 9 10.4 11.4 M12.6 4.6 Q15.4 9 12.6 13.4 M14.8 2.6 Q18.8 9 14.8 15.4" fill="none" stroke="#fff" stroke-width="1.1"/></svg>
<svg class="p" style="left:1782px;top:1053px;" width="18" height="12" viewBox="0 0 18 12"><path d="M4.4 11.4 Q0.6 11.4 0.6 8.2 Q0.6 5.6 3.4 5.2 Q4.6 1.2 8.6 1.2 Q11.6 1.2 12.8 4 Q16.8 4 16.8 7.8 Q16.8 11.4 13.4 11.4Z" fill="#1b8ee6"/><path d="M3.4 5.2 Q4.6 1.2 8.6 1.2 Q11.6 1.2 12.8 4 L6.4 8.2Z" fill="#1467c2"/><path d="M12.8 4 Q16.8 4 16.8 7.8 Q16.8 11.4 13.4 11.4 H7 Z" fill="#35a6f0"/></svg>
<span class="a" style="left:1810px;top:1045px;font-size:12px;color:#fff;letter-spacing:-0.04px;">11:24 AM</span>
<span class="a" style="left:1810px;top:1063px;font-size:12px;color:#fff;letter-spacing:-0.3px;">7/16/2025</span>
<svg class="p" style="left:1878px;top:1051px;" width="18" height="18" viewBox="0 0 18 18"><path d="M1.2 1.4 H16.4 V12.6 H11.6 L8.8 15.6 L6 12.6 H1.2Z" fill="none" stroke="#fff" stroke-width="1.1"/></svg>
<div class="p" style="left:1915px;top:1040px;width:1px;height:40px;background:#5b6a70;"></div>
</div>
</div></body></html>
